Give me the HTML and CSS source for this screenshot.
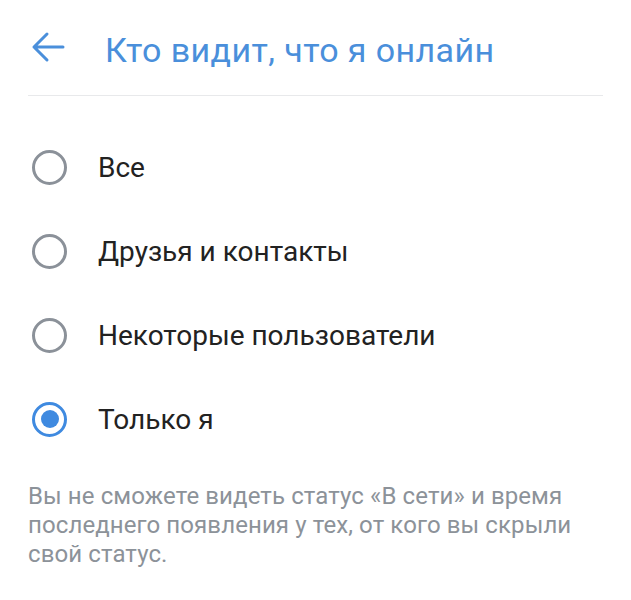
FILE: index.html
```html
<!DOCTYPE html>
<html lang="ru">
<head>
<meta charset="utf-8">
<link rel="stylesheet" href="styles.css">
</head>
<body>
<div class="page">
  <header class="header">
    <svg class="back" width="34" height="34" viewBox="0 0 34 34">
      <path d="M32 17H3M16 4L3 17L16 30" fill="none" stroke="#4a8fdb" stroke-width="3" stroke-linecap="round" stroke-linejoin="round"/>
    </svg>
    <h1 class="title">Кто видит, что я онлайн</h1>
  </header>
  <div class="divider"></div>
  <ul class="options">
    <li class="option"><span class="radio"></span><span class="label">Все</span></li>
    <li class="option"><span class="radio"></span><span class="label">Друзья и контакты</span></li>
    <li class="option"><span class="radio"></span><span class="label">Некоторые пользователи</span></li>
    <li class="option"><span class="radio checked"></span><span class="label">Только я</span></li>
  </ul>
  <p class="note">Вы не сможете видеть статус «В сети» и время последнего появления у тех, от кого вы скрыли свой статус.</p>
</div>
</body>
</html>
```
FILE: styles.css
```css
html, body {
  margin: 0;
  padding: 0;
  background: #ffffff;
}
body {
  font-family: Roboto, "Noto Sans", sans-serif;
}
.page {
  width: 631px;
}
.header {
  display: flex;
  align-items: center;
  height: 95px;
  padding: 0 0 2px 31px;
  box-sizing: border-box;
}
.back {
  display: block;
  flex: none;
}
.title {
  margin: 0 0 0 40px;
  font-size: 34px;
  font-weight: 400;
  letter-spacing: 0.4px;
  color: #4a8fdb;
  line-height: 1;
  position: relative;
  top: 3px;
}
.divider {
  height: 1px;
  background: #e8e9eb;
  margin: 0 28px;
}
.options {
  list-style: none;
  margin: 0;
  padding: 29px 0 0 0;
}
.option {
  display: flex;
  align-items: center;
  height: 84px;
  padding-left: 32px;
}
.radio {
  width: 35px;
  height: 35px;
  box-sizing: border-box;
  border: 3px solid #8b9199;
  border-radius: 50%;
  flex: none;
  position: relative;
}
.radio.checked {
  border-color: #3f8ae0;
}
.radio.checked::after {
  content: "";
  position: absolute;
  left: 50%;
  top: 50%;
  width: 18px;
  height: 18px;
  margin: -9px 0 0 -9px;
  border-radius: 50%;
  background: #3f8ae0;
}
.label {
  margin-left: 31px;
  font-size: 28px;
  color: #222222;
}
.note {
  margin: 21px 28px 0 28px;
  font-size: 24px;
  line-height: 29px;
  letter-spacing: 0.1px;
  color: #8c9299;
}
```
